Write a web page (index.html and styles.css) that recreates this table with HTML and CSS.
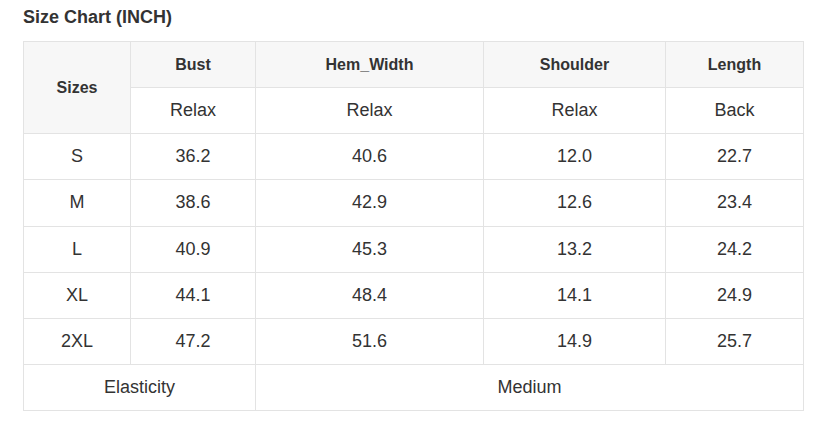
FILE: index.html
```html
<!DOCTYPE html>
<html>
<head>
<meta charset="utf-8">
<link rel="stylesheet" href="styles.css">
</head>
<body>
<div class="chart">
  <h2 class="title">Size Chart (INCH)</h2>
  <table class="size-table">
    <colgroup>
      <col class="c1"><col class="c2"><col class="c3"><col class="c4"><col class="c5">
    </colgroup>
    <thead>
      <tr>
        <th rowspan="2" class="head">Sizes</th>
        <th class="head">Bust</th>
        <th class="head">Hem_Width</th>
        <th class="head">Shoulder</th>
        <th class="head">Length</th>
      </tr>
      <tr>
        <td>Relax</td><td>Relax</td><td>Relax</td><td>Back</td>
      </tr>
    </thead>
    <tbody>
      <tr><td>S</td><td>36.2</td><td>40.6</td><td>12.0</td><td>22.7</td></tr>
      <tr><td>M</td><td>38.6</td><td>42.9</td><td>12.6</td><td>23.4</td></tr>
      <tr><td>L</td><td>40.9</td><td>45.3</td><td>13.2</td><td>24.2</td></tr>
      <tr><td>XL</td><td>44.1</td><td>48.4</td><td>14.1</td><td>24.9</td></tr>
      <tr><td>2XL</td><td>47.2</td><td>51.6</td><td>14.9</td><td>25.7</td></tr>
      <tr><td colspan="2">Elasticity</td><td colspan="3">Medium</td></tr>
    </tbody>
  </table>
</div>
</body>
</html>
```
FILE: styles.css
```css
html, body {
  margin: 0;
  padding: 0;
  background: #fff;
}
body {
  font-family: "Liberation Sans", Arial, sans-serif;
  color: #333;
}
.chart {
  padding: 7px 33px 0 23px;
}
.title {
  margin: 0 0 13px 0;
  font-size: 18px;
  line-height: 21px;
  font-weight: bold;
  color: #333;
}
.size-table {
  border-collapse: collapse;
  width: 781px;
  table-layout: fixed;
}
.c1 { width: 107px; }
.c2 { width: 125px; }
.c3 { width: 228px; }
.c4 { width: 182px; }
.c5 { width: 138px; }
.size-table tr {
  height: 46.125px;
}
.size-table th,
.size-table td {
  border: 1px solid #e3e3e3;
  padding: 0;
  text-align: center;
  vertical-align: middle;
  font-size: 18px;
  line-height: 21px;
  font-weight: normal;
  color: #333;
}
.size-table th.head {
  background: #f7f7f7;
  font-size: 16px;
  font-weight: bold;
  padding-bottom: 1px;
}
```
